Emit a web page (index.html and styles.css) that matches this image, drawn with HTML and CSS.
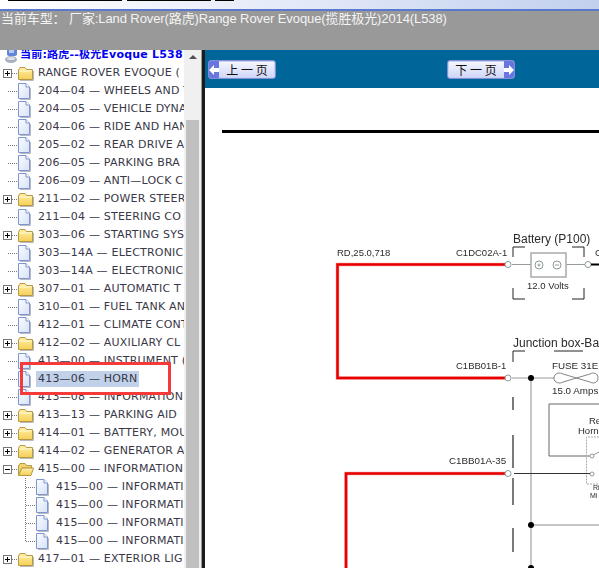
FILE: index.html
```html
<!DOCTYPE html>
<html lang="zh">
<head>
  <meta charset="UTF-8">
  <title>当前车型</title>
  <link rel="stylesheet" href="styles.css">
</head>
<body>
  <svg class="defs" width="0" height="0">
    <defs>
      <linearGradient id="doc-fill" x1="0" y1="0" x2="1" y2="1">
        <stop offset="0" stop-color="#fbfcff"/>
        <stop offset="1" stop-color="#d6e2f8"/>
      </linearGradient>
      <linearGradient id="folder-fill" x1="0" y1="0" x2="0" y2="1">
        <stop offset="0" stop-color="#fff0a8"/>
        <stop offset="1" stop-color="#f5cf55"/>
      </linearGradient>
    </defs>
    <symbol id="plus" viewBox="0 0 18 18">
      <path d="M8 9.500H18" stroke="#777" stroke-dasharray="1 1" fill="none"/>
      <rect x="3.500" y="5.500" width="8" height="8" fill="#fff" stroke="#777"/>
      <path d="M5 9.500H10M7.500 7V12" stroke="#000" fill="none"/>
    </symbol>
    <symbol id="minus" viewBox="0 0 18 18">
      <path d="M8 9.500H18" stroke="#777" stroke-dasharray="1 1" fill="none"/>
      <rect x="3.500" y="5.500" width="8" height="8" fill="#fff" stroke="#777"/>
      <path d="M5 9.500H10" stroke="#000" fill="none"/>
    </symbol>
    <symbol id="line" viewBox="0 0 18 18">
      <path d="M8 9.500H18" stroke="#777" stroke-dasharray="1 1" fill="none"/>
    </symbol>
    <symbol id="branch" viewBox="0 0 18 18">
      <path d="M7.500 0V18M8 9.500H18" stroke="#777" stroke-dasharray="1 1" fill="none"/>
    </symbol>
    <symbol id="branch-end" viewBox="0 0 18 18">
      <path d="M7.500 0V9.500H18" stroke="#777" stroke-dasharray="1 1" fill="none"/>
    </symbol>
    <symbol id="doc" viewBox="0 0 18 18">
      <path d="M12.500 6V17.500H2" stroke="#b9b9c4" fill="none"/>
      <path d="M0.500 1.500H8L11.500 5V16.500H0.500Z" fill="url(#doc-fill)" stroke="#7d96cf"/>
      <path d="M8 1.500V5H11.500" fill="#fff" stroke="#7d96cf"/>
    </symbol>
    <symbol id="folder" viewBox="0 0 18 18">
      <path d="M15.500 7V16.500H2" stroke="#bbb" fill="none"/>
      <path d="M0.500 6L2 3.500H7L8.500 5.500H14.500V15.500H0.500Z" fill="url(#folder-fill)" stroke="#b59a45" stroke-linejoin="round"/>
      <path d="M1.500 7H13.500" stroke="#fff9d8" fill="none"/>
    </symbol>
    <symbol id="folder-open" viewBox="0 0 18 18">
      <path d="M0.500 6L2 3.500H7L8.500 5.500H13.500V8H4L0.500 15.500Z" fill="#f4d36f" stroke="#b59a45"/>
      <path d="M4 8H15.500L13 15.500H0.500Z" fill="url(#folder-fill)" stroke="#b59a45"/>
    </symbol>
  </svg>

  <div class="topstrip">
    <span class="tab tab-a"></span>
    <span class="tab tab-b"></span>
    <span class="tab tab-c"></span>
  </div>
  <div class="header">当前车型： 厂家:Land Rover(路虎)Range Rover Evoque(揽胜极光)2014(L538)</div>

  <div class="main">
    <div class="tree">
      <div class="row root">
        <svg class="ico-root" width="18" height="18" viewBox="0 0 18 18">
          <rect x="5" y="1" width="10" height="9" rx="2" fill="#5f86d8"/>
          <rect x="7" y="3" width="5" height="4" fill="#b8ccf2"/>
          <ellipse cx="9" cy="13.500" rx="6" ry="3.500" fill="#aab0bd"/>
          <ellipse cx="9" cy="12.500" rx="4" ry="1.500" fill="#dfe3ea"/>
        </svg>
        <span class="root-label">当前:路虎--极光Evoque L538</span>
      </div>
      <div class="row"><svg class="ico"><use href="#plus"/></svg><svg class="ico"><use href="#folder"/></svg><span class="label">RANGE ROVER EVOQUE (</span></div>
      <div class="row"><svg class="ico"><use href="#line"/></svg><svg class="ico"><use href="#doc"/></svg><span class="label">204—04 — WHEELS AND T</span></div>
      <div class="row"><svg class="ico"><use href="#line"/></svg><svg class="ico"><use href="#doc"/></svg><span class="label">204—05 — VEHICLE DYNA</span></div>
      <div class="row"><svg class="ico"><use href="#line"/></svg><svg class="ico"><use href="#doc"/></svg><span class="label">204—06 — RIDE AND HAN</span></div>
      <div class="row"><svg class="ico"><use href="#line"/></svg><svg class="ico"><use href="#doc"/></svg><span class="label">205—02 — REAR DRIVE A</span></div>
      <div class="row"><svg class="ico"><use href="#line"/></svg><svg class="ico"><use href="#doc"/></svg><span class="label">206—05 — PARKING BRA</span></div>
      <div class="row"><svg class="ico"><use href="#line"/></svg><svg class="ico"><use href="#doc"/></svg><span class="label">206—09 — ANTI—LOCK C</span></div>
      <div class="row"><svg class="ico"><use href="#plus"/></svg><svg class="ico"><use href="#folder"/></svg><span class="label">211—02 — POWER STEER</span></div>
      <div class="row"><svg class="ico"><use href="#line"/></svg><svg class="ico"><use href="#doc"/></svg><span class="label">211—04 — STEERING CO</span></div>
      <div class="row"><svg class="ico"><use href="#plus"/></svg><svg class="ico"><use href="#folder"/></svg><span class="label">303—06 — STARTING SYS</span></div>
      <div class="row"><svg class="ico"><use href="#line"/></svg><svg class="ico"><use href="#doc"/></svg><span class="label">303—14A — ELECTRONIC</span></div>
      <div class="row"><svg class="ico"><use href="#line"/></svg><svg class="ico"><use href="#doc"/></svg><span class="label">303—14A — ELECTRONIC</span></div>
      <div class="row"><svg class="ico"><use href="#plus"/></svg><svg class="ico"><use href="#folder"/></svg><span class="label">307—01 — AUTOMATIC T</span></div>
      <div class="row"><svg class="ico"><use href="#line"/></svg><svg class="ico"><use href="#doc"/></svg><span class="label">310—01 — FUEL TANK AN</span></div>
      <div class="row"><svg class="ico"><use href="#line"/></svg><svg class="ico"><use href="#doc"/></svg><span class="label">412—01 — CLIMATE CONT</span></div>
      <div class="row"><svg class="ico"><use href="#plus"/></svg><svg class="ico"><use href="#folder"/></svg><span class="label">412—02 — AUXILIARY CL</span></div>
      <div class="row"><svg class="ico"><use href="#line"/></svg><svg class="ico"><use href="#doc"/></svg><span class="label">413—00 — INSTRUMENT (</span></div>
      <div class="row"><svg class="ico"><use href="#line"/></svg><svg class="ico"><use href="#doc"/></svg><span class="label selected">413—06 — HORN</span></div>
      <div class="row"><svg class="ico"><use href="#line"/></svg><svg class="ico"><use href="#doc"/></svg><span class="label">413—08 — INFORMATION</span></div>
      <div class="row"><svg class="ico"><use href="#plus"/></svg><svg class="ico"><use href="#folder"/></svg><span class="label">413—13 — PARKING AID</span></div>
      <div class="row"><svg class="ico"><use href="#plus"/></svg><svg class="ico"><use href="#folder"/></svg><span class="label">414—01 — BATTERY, MOU</span></div>
      <div class="row"><svg class="ico"><use href="#plus"/></svg><svg class="ico"><use href="#folder"/></svg><span class="label">414—02 — GENERATOR A</span></div>
      <div class="row"><svg class="ico"><use href="#minus"/></svg><svg class="ico"><use href="#folder-open"/></svg><span class="label">415—00 — INFORMATION</span></div>
      <div class="row child"><svg class="ico"><use href="#branch"/></svg><svg class="ico"><use href="#doc"/></svg><span class="label">415—00 — INFORMATI</span></div>
      <div class="row child"><svg class="ico"><use href="#branch"/></svg><svg class="ico"><use href="#doc"/></svg><span class="label">415—00 — INFORMATI</span></div>
      <div class="row child"><svg class="ico"><use href="#branch"/></svg><svg class="ico"><use href="#doc"/></svg><span class="label">415—00 — INFORMATI</span></div>
      <div class="row child"><svg class="ico"><use href="#branch-end"/></svg><svg class="ico"><use href="#doc"/></svg><span class="label">415—00 — INFORMATI</span></div>
      <div class="row"><svg class="ico"><use href="#plus"/></svg><svg class="ico"><use href="#folder"/></svg><span class="label">417—01 — EXTERIOR LIG</span></div>
    </div>

    <div class="scrollbar">
      <span class="arrow-up"></span>
      <span class="thumb"></span>
    </div>
    <div class="splitter"></div>

    <div class="content">
      <div class="navbar">
        <button class="page-btn prev">
          <span class="arrow-cell">
            <svg width="10" height="10" viewBox="0 0 10 10"><path d="M0 5L5 0V3H10V7H5V10Z" fill="#fff"/></svg>
          </span>
          <span class="btn-text">上 一 页</span>
        </button>
        <button class="page-btn next">
          <span class="btn-text">下 一 页</span>
          <span class="arrow-cell">
            <svg width="10" height="10" viewBox="0 0 10 10"><path d="M10 5L5 0V3H0V7H5V10Z" fill="#fff"/></svg>
          </span>
        </button>
      </div>

      <svg class="diagram" width="394" height="480" viewBox="205 88 394 480">
        <rect x="222" y="130" width="377" height="3" fill="#000"/>

        <!-- red wires -->
        <path class="wire-halo" d="M508 264.500H337.500V378H508"/>
        <path class="wire" d="M508 264.500H337.500V378H508"/>
        <path class="wire-halo" d="M508 473.500H346V568"/>
        <path class="wire" d="M508 473.500H346V568"/>

        <text class="t9" x="337" y="256">RD,25.0,718</text>
        <text class="t9" x="456" y="256">C1DC02A-1</text>
        <text class="t9" x="456" y="369">C1BB01B-1</text>
        <text class="t10" x="449" y="464">C1BB01A-35</text>

        <!-- battery -->
        <text class="t12" x="513" y="243">Battery (P100)</text>
        <path class="bracket" d="M513 257V247H525M572 247H584V257M513 288V299H525M572 299H584V288"/>
        <path class="gray-thin" d="M512 264.500H585"/>
        <rect class="gray-box" x="531" y="253" width="35" height="24"/>
        <circle class="term" cx="539" cy="265" r="4"/>
        <circle class="term" cx="557" cy="265" r="4"/>
        <path class="gray-thin" d="M537.500 265H540.500M539 263.500V266.500M555 265H559"/>
        <text class="t9" x="527" y="289">12.0 Volts</text>
        <circle class="term" cx="588" cy="264.500" r="3"/>
        <path class="black-wire" d="M591 264.500H599"/>
        <text class="t9" x="595" y="256">C</text>

        <!-- junction box -->
        <text class="t12" x="513" y="347">Junction box-Ba</text>
        <path class="bracket" d="M513 362V351H525M554 351H583"/>
        <text class="t10" x="552" y="369">FUSE 31E</text>
        <text class="t10" x="552" y="394">15.0 Amps</text>
        <path class="gray-thin" d="M512 378H554"/>
        <path class="fuse" d="M554 378C554 373 560 372 563 374L590 382C593 384 598 383 598 378C598 373 593 372 590 374L563 382C560 384 554 383 554 378Z"/>
        <path class="bus" d="M531 378V568M531 525H599"/>
        <circle class="dot" cx="531" cy="378" r="3"/>
        <circle class="dot" cx="531" cy="525" r="3"/>
        <circle class="dot" cx="531" cy="568" r="3"/>
        <path class="dash" d="M513 397V410M513 435V468M513 478V505M513 528V552"/>

        <!-- relay -->
        <path class="relay-box" d="M599 404H549V456H590"/>
        <text class="t9" x="589" y="424">Re</text>
        <text class="t9" x="578" y="434">Horn</text>
        <path class="relay-inner" d="M599 437H586.500V484H599"/>
        <path class="gray-thin" d="M593 455L599 452"/>
        <circle class="term" cx="592" cy="456" r="2"/>
        <circle class="term" cx="592" cy="474" r="2"/>
        <path class="black-wire thin" d="M514 473.500H590"/>
        <text class="t8" x="593" y="490">Ri</text>
        <text class="t8" x="590" y="498">Mi</text>

        <!-- terminals -->
        <circle class="term" cx="508" cy="264.500" r="3"/>
        <circle class="term" cx="508" cy="378" r="3"/>
        <circle class="term" cx="508" cy="473.500" r="3"/>
      </svg>
    </div>
  </div>

  <div class="callout"></div>
</body>
</html>
```

FILE: styles.css
```css
html, body {
  margin: 0;
  padding: 0;
}
body {
  width: 599px;
  height: 568px;
  overflow: hidden;
  position: relative;
  background: #fff;
}
.defs { position: absolute; }

.topstrip {
  height: 9px;
  display: flex;
  align-items: flex-start;
  gap: 4px;
  padding-left: 8px;
  background: linear-gradient(to right, #fff 0%, #e3e9f8 50%, #c2d0ee 100%);
  border-bottom: 2px solid #5a78cc;
}
.tab {
  height: 1px;
  background: #000;
}
.tab-a { width: 114px; }
.tab-b { width: 84px; margin-left: 1px; }
.tab-c { width: 19px; }

.header {
  height: 39px;
  box-sizing: border-box;
  padding-left: 1px;
  background: #999;
  color: #f4f4f4;
  font-family: "Liberation Sans", "Noto Sans CJK SC", sans-serif;
  font-size: 13px;
  letter-spacing: -0.1px;
  line-height: 15px;
  white-space: nowrap;
}

.main {
  display: flex;
  height: 518px;
}

/* left tree */
.tree {
  width: 184px;
  flex: none;
  overflow: hidden;
  background: #fff;
  color: #3a3848;
  font-family: "DejaVu Sans", "Noto Sans CJK SC", sans-serif;
  font-size: 11px;
  letter-spacing: 0.2px;
}
.row {
  display: flex;
  align-items: center;
  height: 18px;
  white-space: nowrap;
}
.row.root {
  height: 18px;
  margin-top: -6px;
  padding-left: 2px;
  padding-bottom: 2px;
  color: #0000f0;
  font-weight: bold;
}
.row.child { padding-left: 18px; }
.ico {
  width: 18px;
  height: 18px;
  flex: none;
}
.ico-root {
  flex: none;
  margin-top: 3px;
}
.label {
  margin-left: 2px;
  line-height: 16px;
}
.label.selected {
  margin-left: 0;
  padding: 0 2px;
  background: #c0d1e9;
}

.scrollbar {
  width: 17px;
  flex: none;
  background: #f0f0f0;
  display: flex;
  flex-direction: column;
  align-items: center;
}
.arrow-up {
  margin-top: 5px;
  width: 0;
  height: 0;
  border-left: 4px solid transparent;
  border-right: 4px solid transparent;
  border-bottom: 4px solid #505050;
}
.thumb {
  margin-top: 61px;
  width: 13px;
  flex: 1;
  background: #c0c0c0;
}
.splitter {
  width: 4px;
  flex: none;
  box-sizing: border-box;
  background: #1c1c1c;
  border-left: 1px solid #999;
}

/* right page */
.content {
  flex: 1;
  min-width: 0;
  background: #fff;
}
.navbar {
  height: 38px;
  box-sizing: border-box;
  padding-top: 10px;
  padding-left: 3px;
  display: flex;
  align-items: flex-start;
  gap: 171px;
  background: #006699;
}
.page-btn {
  width: 68px;
  height: 19px;
  padding: 0;
  display: flex;
  align-items: stretch;
  border: 1px solid #7f8fd8;
  border-radius: 3px;
  background: linear-gradient(to bottom, #f6f7ff, #cfd5f7);
  box-shadow: 0 0 0 1px #c9d2f4 inset;
  color: #111;
  font-family: "Noto Sans CJK SC", sans-serif;
  font-size: 12px;
  line-height: 17px;
  overflow: hidden;
}
.arrow-cell {
  width: 10px;
  flex: none;
  display: flex;
  align-items: center;
  justify-content: center;
  background: #6a76e0;
}
.btn-text {
  flex: 1;
  text-align: center;
  white-space: nowrap;
}
.diagram {
  display: block;
  filter: blur(0.3px);
}

.diagram text {
  font-family: "Liberation Sans", sans-serif;
  fill: #2b2b2b;
}
.t8 { font-size: 7px; }
.t9 { font-size: 9.5px; }
.t10 { font-size: 9.8px; }
.t12 { font-size: 12px; }

.wire, .wire-halo { fill: none; }
.wire { stroke: #e80000; stroke-width: 2.5; }
.wire-halo { stroke: #f3a9a9; stroke-width: 3.5; }
.bracket, .dash {
  fill: none;
  stroke: #222;
  stroke-width: 1;
}
.dash { stroke-width: 1.2; }
.gray-thin {
  fill: none;
  stroke: #9a9a9a;
  stroke-width: 1;
}
.gray-box {
  fill: #fff;
  stroke: #aaa;
  stroke-width: 1.5;
}
.term {
  fill: #fff;
  stroke: #8a9a9a;
  stroke-width: 1;
}
.black-wire {
  fill: none;
  stroke: #000;
  stroke-width: 2;
}
.black-wire.thin {
  stroke: #333;
  stroke-width: 1;
}
.fuse {
  fill: #fff;
  stroke: #666;
  stroke-width: 0.8;
}
.bus {
  fill: none;
  stroke: #c6c6c6;
  stroke-width: 2;
}
.dot { fill: #000; }
.relay-box {
  fill: none;
  stroke: #666;
  stroke-width: 1;
}
.relay-inner {
  fill: none;
  stroke: #aaa;
  stroke-width: 1;
  stroke-dasharray: 2 1;
}

/* red annotation drawn over the tree */
.callout {
  position: absolute;
  left: 20px;
  top: 362px;
  width: 151px;
  height: 33px;
  box-sizing: border-box;
  border: 3px solid #f63a3a;
}
```
